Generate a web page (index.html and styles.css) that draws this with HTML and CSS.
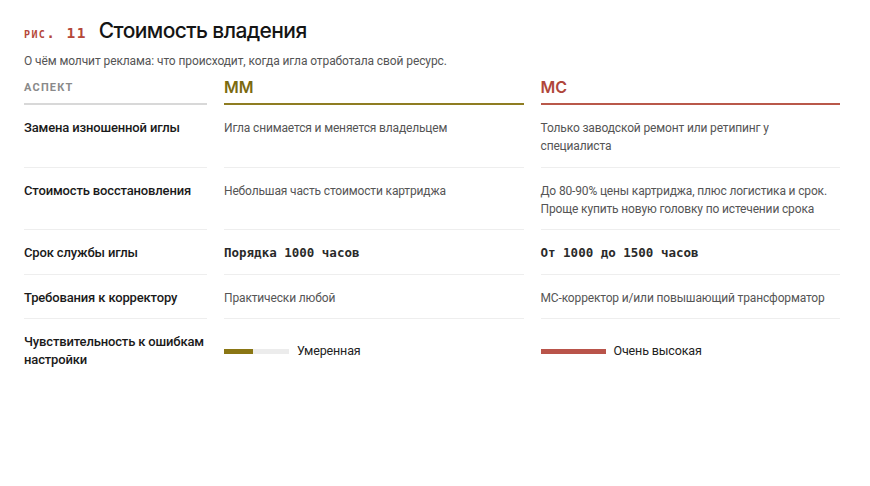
FILE: index.html
```html
<!DOCTYPE html>
<html lang="ru">
<head>
<meta charset="utf-8">
<link rel="stylesheet" href="styles.css">
</head>
<body>
<div class="fig">
  <div class="title-row">
    <span class="fig-num">рис. 11</span>
    <h1 class="title">Стоимость владения</h1>
  </div>
  <p class="subtitle">О чём молчит реклама: что происходит, когда игла отработала свой ресурс.</p>
  <div class="table">
    <div class="th th-aspect">АСПЕКТ</div>
    <div class="th th-mm">ММ</div>
    <div class="th th-mc">МС</div>

    <div class="cell label">Замена изношенной иглы</div>
    <div class="cell val">Игла снимается и меняется владельцем</div>
    <div class="cell val">Только заводской ремонт или ретипинг у специалиста</div>

    <div class="cell label">Стоимость восстановления</div>
    <div class="cell val">Небольшая часть стоимости картриджа</div>
    <div class="cell val">До 80-90% цены картриджа, плюс логистика и срок. Проще купить новую головку по истечении срока</div>

    <div class="cell label">Срок службы иглы</div>
    <div class="cell val mono">Порядка 1000 часов</div>
    <div class="cell val mono">От 1000 до 1500 часов</div>

    <div class="cell label">Требования к корректору</div>
    <div class="cell val">Практически любой</div>
    <div class="cell val">МС-корректор и/или повышающий трансформатор</div>

    <div class="cell label last">Чувствительность к ошибкам настройки</div>
    <div class="cell val last meter-cell"><span class="meter"><span class="fill fill-mm" style="width:45%"></span></span><span class="meter-label">Умеренная</span></div>
    <div class="cell val last meter-cell"><span class="meter"><span class="fill fill-mc" style="width:100%"></span></span><span class="meter-label">Очень высокая</span></div>
  </div>
</div>
</body>
</html>
```
FILE: styles.css
```css
html, body { margin: 0; padding: 0; background: #fff; }
body { font-family: Roboto, "Noto Sans", sans-serif; color: #1a1a1a; }
.fig { padding: 18px 30px 0 24px; width: 816px; }
.title-row { display: flex; align-items: baseline; gap: 12px; }
.fig-num { font-family: "DejaVu Sans Mono", monospace; font-weight: bold; font-size: 14.5px; color: #b5483a; font-variant: small-caps; letter-spacing: 1.4px; }
.title { margin: 0; font-family: Inter, sans-serif; font-size: 21px; font-weight: 500; color: #151515; letter-spacing: -0.6px; line-height: 26px; }
.subtitle { margin: 8px 0 0; font-size: 12px; letter-spacing: -0.1px; color: #555; line-height: 18px; }
.table { display: grid; grid-template-columns: 183px 1fr 1fr; column-gap: 17px; margin-top: 6px; }
.th { padding: 0 0 5px; border-bottom: 2px solid #d8d8d8; line-height: 22px; }
.th-aspect { font-weight: 700; font-size: 11px; letter-spacing: 1.2px; color: #8a8a8a; padding-top: 1px; padding-bottom: 4px; }
.th-mm { font-family: Inter, sans-serif; font-size: 16px; font-weight: 600; color: #7b6a10; border-bottom-color: #8f7d22; }
.th-mc { font-family: Inter, sans-serif; font-size: 16px; font-weight: 600; color: #b0473a; border-bottom-color: #b9584a; }
.cell { padding: 14px 0 11.5px; border-bottom: 1px solid #eeeeee; font-size: 12px; letter-spacing: -0.15px; line-height: 18px; }
.cell.last { border-bottom: none; }
.label { font-weight: 500; font-size: 13px; letter-spacing: -0.15px; color: #1a1a1a; }
.val { color: #555; }
.mono { font-family: "DejaVu Sans Mono", monospace; font-weight: bold; color: #2a2a2a; font-size: 12.5px; letter-spacing: 0; }
.meter-cell { display: flex; align-items: center; gap: 8px; }
.meter { display: block; width: 65px; height: 5px; background: #ececec; }
.fill { display: block; height: 100%; }
.fill-mm { background: #8a7614; }
.fill-mc { background: #b9544a; }
.meter-label { color: #222; font-size: 12.5px; }
```
